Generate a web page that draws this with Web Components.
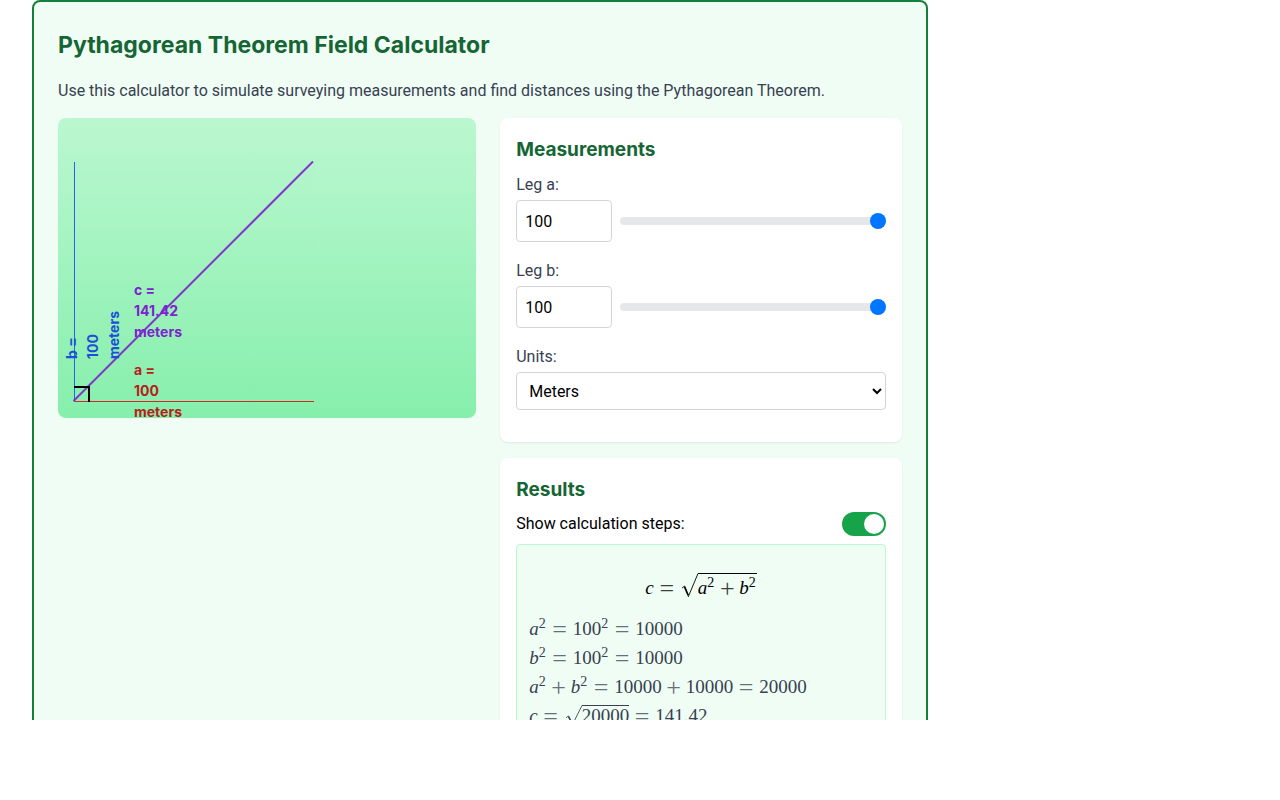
<!DOCTYPE html>
<html lang="en">
<head>
<meta charset="utf-8">
<title>Pythagorean Theorem Field Calculator</title>
<style>
  body { margin: 0; background: #fff; color: #000; font: 16px/24px Roboto, "Liberation Sans", sans-serif; }
</style>
</head>
<body>
<field-calculator></field-calculator>

<template id="field-calculator">
  <style>
    :host { display: block; height: 90vh; overflow: hidden; padding: 0 32px; box-sizing: border-box; }
    main { box-sizing: border-box; max-width: 896px; padding: 24px; border: 2px solid #15803d; border-radius: 8px; background: #f0fdf4; }
    h2 { margin: 0 0 14px; font: 700 23px/38px Inter, "Liberation Sans", sans-serif; color: #166534; }
    p { margin: 0 0 14px; line-height: 26px; color: #374151; }
    .columns { display: grid; grid-template-columns: 51fr 49fr; gap: 24px; align-items: start; }
    .side { display: grid; gap: 16px; }
  </style>
  <main>
    <h2>Pythagorean Theorem Field Calculator</h2>
    <p>Use this calculator to simulate surveying measurements and find distances using the Pythagorean Theorem.</p>
    <div class="columns">
      <triangle-view></triangle-view>
      <div class="side">
        <panel-card heading="Measurements">
          <leg-field label="Leg a:" value="100"></leg-field>
          <leg-field label="Leg b:" value="100"></leg-field>
          <unit-field></unit-field>
        </panel-card>
        <panel-card heading="Results">
          <toggle-row>Show calculation steps:</toggle-row>
          <calculation-steps></calculation-steps>
        </panel-card>
      </div>
    </div>
  </main>
</template>

<template id="triangle-view">
  <style>
    :host { display: block; height: 300px; border-radius: 8px; overflow: hidden; background: linear-gradient(#bbf7d0, #86efac); }
    svg { display: block; width: 100%; height: 100%; }
    text { font: 700 14px Inter, "Liberation Sans", sans-serif; }
  </style>
  <svg role="img" aria-label="Right triangle">
    <rect x="16" y="283" width="240" height="1" fill="#dc2626"/>
    <rect x="16" y="44" width="1" height="240" fill="#2563eb"/>
    <line x1="15.5" y1="283" x2="255" y2="43.5" stroke="#7e22ce" stroke-width="2" opacity=".9"/>
    <path d="M16 269H31V284" fill="none" stroke="#000" stroke-width="2"/>
    <text fill="#b91c1c"><tspan x="76" y="257">a =</tspan><tspan x="76" y="278">100</tspan><tspan x="76" y="299">meters</tspan></text>
    <text fill="#1d4ed8" transform="translate(0 241) rotate(-90)"><tspan x="0" y="19">b =</tspan><tspan x="0" y="40">100</tspan><tspan x="0" y="61">meters</tspan></text>
    <text fill="#7e22ce"><tspan x="76" y="177">c =</tspan><tspan x="76" y="198">141.42</tspan><tspan x="76" y="219">meters</tspan></text>
  </svg>
</template>

<template id="panel-card">
  <style>
    :host { display: block; padding: 16px; border-radius: 8px; background: #fff; box-shadow: 0 1px 2px rgb(0 0 0 / .08); }
    h3 { margin: 0 0 6px; font: 700 19px/32px Inter, "Liberation Sans", sans-serif; color: #166534; }
  </style>
  <h3></h3>
  <slot></slot>
</template>

<template id="leg-field">
  <style>
    :host { display: block; margin-bottom: 16px; }
    label { display: block; margin-bottom: 2px; line-height: 26px; color: #374151; }
    .row { display: flex; align-items: center; gap: 8px; }
    input { margin: 0; box-sizing: border-box; font: inherit; color: #000; }
    .number { width: 96px; height: 42px; padding: 8px; border: 1px solid #d1d5db; border-radius: 4px; background: #fff; }
    .range { flex: 1; min-width: 0; height: 8px; border-radius: 8px; background: #e5e7eb; appearance: none; }
    .range::-webkit-slider-thumb { appearance: none; width: 16px; height: 16px; border-radius: 50%; background: #0075ff; }
  </style>
  <label for="value"></label>
  <div class="row">
    <input class="number" id="value" type="number" min="1" max="100">
    <input class="range" type="range" min="1" max="100">
  </div>
</template>

<template id="unit-field">
  <style>
    :host { display: block; margin-bottom: 16px; }
    label { display: block; margin-bottom: 2px; line-height: 26px; color: #374151; }
    select { display: block; width: 100%; height: 38px; box-sizing: border-box; padding: 0 0 0 8px; border: 1px solid #d1d5db; border-radius: 4px; background: #fff; color: #000; font: inherit; }
  </style>
  <label for="units">Units:</label>
  <select id="units"><option>Meters</option><option>Feet</option></select>
</template>

<template id="toggle-row">
  <style>
    :host { display: block; margin-bottom: 8px; }
    label { display: flex; justify-content: space-between; align-items: center; }
    input { appearance: none; box-sizing: border-box; display: flex; width: 44px; height: 24px; margin: 0; padding: 2px; border-radius: 12px; background: #d1d5db; }
    input::before { content: ""; width: 20px; height: 20px; border-radius: 50%; background: #fff; }
    input:checked { justify-content: flex-end; background: #16a34a; }
  </style>
  <label><slot></slot><input type="checkbox" checked></label>
</template>

<template id="calculation-steps">
  <style>
    :host { display: block; padding: 12px; border: 1px solid #bbf7d0; border-radius: 4px; background: #f0fdf4; font: 19px/29px "Liberation Serif", serif; color: #374151; }
    div { white-space: nowrap; }
    .formula { margin: 16px 0 12px; text-align: center; color: #000; }
    sup { font-size: 14px; line-height: 0; vertical-align: 7px; margin-right: 1px; }
    b { display: inline-block; width: 16px; margin: 0 5px; text-align: center; font-size: 26px; line-height: 16px; font-weight: 400; vertical-align: -3px; opacity: .75; }
    .plus { margin: 0 4px; }
    math-root { margin-left: 1px; }
    .formula math-root { --rise: 4px; }
  </style>
  <div class="formula"><i>c</i><b>=</b><math-root><i>a</i><sup>2</sup><b class="plus">+</b><i>b</i><sup>2</sup></math-root></div>
  <div><i>a</i><sup>2</sup><b>=</b>100<sup>2</sup><b>=</b>10000</div>
  <div><i>b</i><sup>2</sup><b>=</b>100<sup>2</sup><b>=</b>10000</div>
  <div><i>a</i><sup>2</sup><b class="plus">+</b><i>b</i><sup>2</sup><b>=</b>10000<b class="plus">+</b>10000<b>=</b>20000</div>
  <div><i>c</i><b>=</b><math-root>20000</math-root><b>=</b>141.42</div>
</template>

<template id="math-root">
  <style>
    :host { display: inline-grid; grid-template-columns: 17px auto; align-items: baseline; line-height: 20px; }
    svg { width: 17px; height: 100%; min-height: 0; align-self: stretch; contain: size; }
    span { padding-top: var(--rise, 0); border-top: 1px solid; }
  </style>
  <svg viewBox="0 0 17 24" preserveAspectRatio="none" aria-hidden="true"><path d="M1 14.5L3.6 12.5" fill="none" stroke="currentColor" stroke-width=".8"/><path d="M3.4 12.8L7.2 21.5" fill="none" stroke="currentColor" stroke-width="1.7"/><path d="M7.2 23L17 .5" fill="none" stroke="currentColor" stroke-width=".9"/></svg><span><slot></slot></span>
</template>

<script>
  class TemplateElement extends HTMLElement {
    constructor() {
      super();
      this.attachShadow({ mode: "open" })
        .append(document.getElementById(this.localName).content.cloneNode(true));
    }
  }

  customElements.define("math-root", class extends TemplateElement {});
  customElements.define("calculation-steps", class extends TemplateElement {});
  customElements.define("toggle-row", class extends TemplateElement {});
  customElements.define("unit-field", class extends TemplateElement {});
  customElements.define("triangle-view", class extends TemplateElement {});

  customElements.define("leg-field", class extends TemplateElement {
    connectedCallback() {
      const label = this.getAttribute("label");
      const [number, range] = this.shadowRoot.querySelectorAll("input");
      this.shadowRoot.querySelector("label").textContent = label;
      range.setAttribute("aria-label", label);
      number.value = range.value = this.getAttribute("value");
      number.oninput = () => { range.value = number.value; };
      range.oninput = () => { number.value = range.value; };
    }
  });

  customElements.define("panel-card", class extends TemplateElement {
    connectedCallback() {
      this.shadowRoot.querySelector("h3").textContent = this.getAttribute("heading");
    }
  });

  customElements.define("field-calculator", class extends TemplateElement {});
</script>
</body>
</html>
